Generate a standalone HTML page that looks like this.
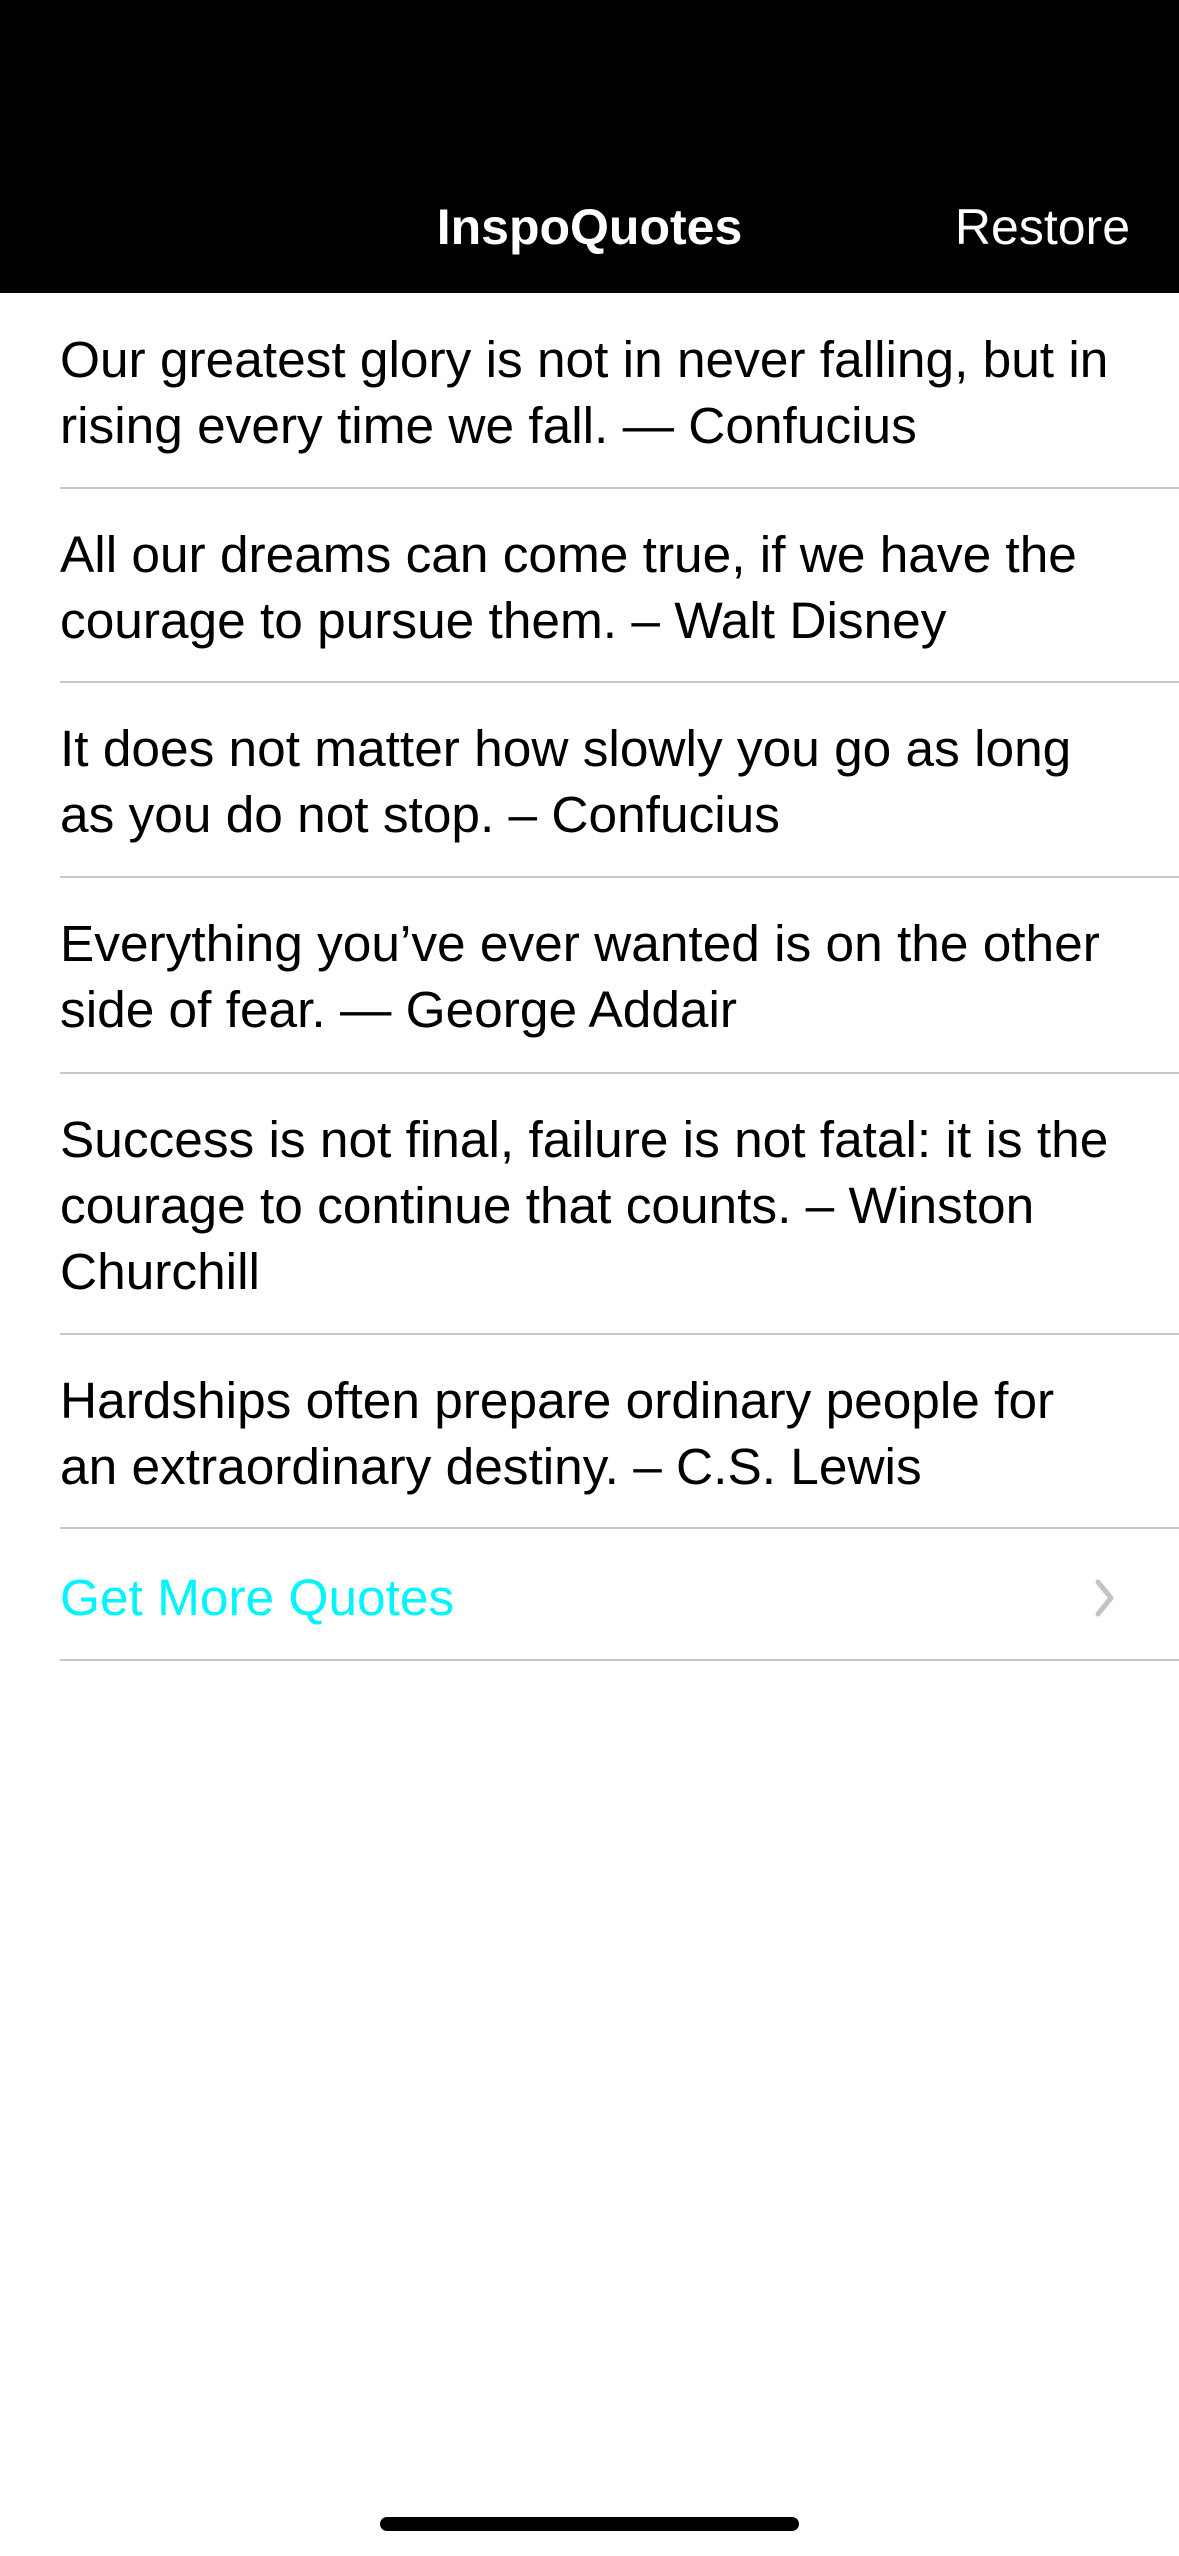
<!DOCTYPE html>
<html><head><meta charset="utf-8"><style>
*{margin:0;padding:0;box-sizing:border-box}
body{width:1179px;height:2556px;background:#fff;font-family:"Liberation Sans",sans-serif;position:relative;overflow:hidden}
.hdr{position:absolute;left:0;top:0;width:1179px;height:293px;background:#000}
.title{position:absolute;top:197px;left:0;width:1179px;text-align:center;color:#fff;font-weight:bold;font-size:50px;line-height:60px}
.rest{position:absolute;top:197px;right:49px;color:#fff;font-size:50px;line-height:60px}
.row{position:absolute;left:60px;right:0;border-bottom:2px solid #c8c8cc}
.txt{position:absolute;left:0;font-size:51.4px;line-height:66px;color:#000;white-space:nowrap}
.chev{position:absolute;left:1090px;top:1578px}
.home{position:absolute;left:380px;top:2517px;width:419px;height:14px;border-radius:7px;background:#000}
</style></head><body>
<div class="hdr"><div class="title">InspoQuotes</div><div class="rest">Restore</div></div>
<div class="row" style="top:293px;height:196px"><div class="txt" style="top:33px">Our greatest glory is not in never falling, but in<br>rising every time we fall. — Confucius</div></div>
<div class="row" style="top:489px;height:194px"><div class="txt" style="top:32px">All our dreams can come true, if we have the<br>courage to pursue them. – Walt Disney</div></div>
<div class="row" style="top:683px;height:195px"><div class="txt" style="top:32px">It does not matter how slowly you go as long<br>as you do not stop. – Confucius</div></div>
<div class="row" style="top:878px;height:196px"><div class="txt" style="top:32px">Everything you’ve ever wanted is on the other<br>side of fear. — George Addair</div></div>
<div class="row" style="top:1074px;height:261px"><div class="txt" style="top:32px">Success is not final, failure is not fatal: it is the<br>courage to continue that counts. – Winston<br>Churchill</div></div>
<div class="row" style="top:1335px;height:194px"><div class="txt" style="top:32px">Hardships often prepare ordinary people for<br>an extraordinary destiny. – C.S. Lewis</div></div>
<div class="row" style="top:1529px;height:132px"><div class="txt" style="top:35px;color:#00f5ff">Get More Quotes</div></div>
<svg class="chev" width="30" height="40" viewBox="0 0 30 40"><path d="M8 4 L21 20 L8 36" fill="none" stroke="#c4c4c7" stroke-width="5" stroke-linecap="round" stroke-linejoin="round"/></svg>
<div class="home"></div>
</body></html>
